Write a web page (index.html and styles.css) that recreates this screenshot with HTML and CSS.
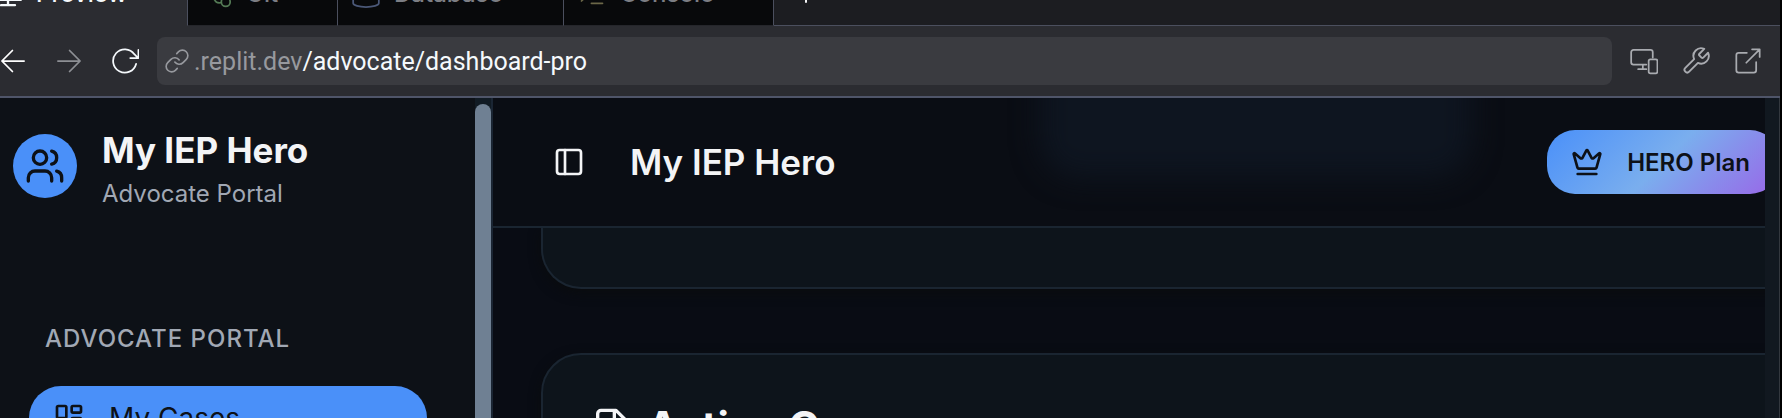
FILE: index.html
```html
<!DOCTYPE html>
<html lang="en">
<head>
<meta charset="utf-8">
<title>My IEP Hero</title>
<link rel="stylesheet" href="styles.css">
</head>
<body>
<div class="window">
  <nav class="tabs" aria-label="Panes">
    <button class="tab tab-preview active"><svg class="ico" viewBox="0 0 24 24"><path d="M1 4h22v13H1zM12 17v4.500M6 21.600h12"/></svg>Preview</button>
    <button class="tab tab-git"><svg class="ico green" viewBox="0 0 24 24"><circle cx="7" cy="5" r="3"/><circle cx="13.500" cy="18.800" r="3.800"/><path d="M7 8v2a4 4 0 0 0-3 7q1 3 5 2.500"/></svg>Git</button>
    <button class="tab tab-db"><svg class="ico blue" viewBox="0 0 24 24"><ellipse cx="12" cy="5" rx="11" ry="3"/><path d="M1 5v15c0 1.700 5 3.200 11 3.200s11-1.500 11-3.200V5"/></svg>Database</button>
    <button class="tab tab-console"><svg class="ico olive" viewBox="0 0 24 24"><path d="M3 18l6-6-6-6M11.500 20h9.500"/></svg>Console</button>
    <div class="tab-rest"><button class="add" aria-label="New tab"><svg class="ico" viewBox="0 0 24 24"><path d="M12 4v16M4 12h16"/></svg></button></div>
  </nav>
  <div class="toolbar">
    <button class="tool back" aria-label="Back"><svg viewBox="0 0 24 24"><path d="M21.500 12H3M11.500 3L2.500 12l9 9"/></svg></button>
    <button class="tool forward" aria-label="Forward"><svg viewBox="0 0 24 24"><path d="M2.500 12H21M12.500 3l9 9-9 9"/></svg></button>
    <button class="tool reload" aria-label="Reload"><svg viewBox="0 0 24 24"><path d="M21.500 14.500A10 10 0 1 1 20 6.200l2.500 2.500M23.500 2.500v7h-7"/></svg></button>
    <a class="address" href="#"><svg class="link" viewBox="1 1 22 22"><path d="M10 13a5 5 0 0 0 7.540.540l3-3a5 5 0 0 0-7.070-7.070l-1.720 1.710"/><path d="M14 11a5 5 0 0 0-7.540-.540l-3 3a5 5 0 0 0 7.070 7.070l1.710-1.710"/></svg><span><span class="host">.replit.dev</span>/advocate/dashboard-pro</span></a>
    <div class="tools">
      <button class="tool" aria-label="Devices"><svg viewBox="0 0 24 24"><path d="M19.500 9V4.500a2 2 0 0 0-2-2H3a2 2 0 0 0-2 2V13a2 2 0 0 0 2 2h11M11 15v4M7 19h7"/><rect x="16" y="10.500" width="7.500" height="12" rx="1.500"/></svg></button>
      <button class="tool" aria-label="Developer tools"><svg class="wrench" viewBox="1 1 22 22"><path d="M14.700 6.300a1 1 0 0 0 0 1.400l1.600 1.600a1 1 0 0 0 1.400 0l3.770-3.770a6 6 0 0 1-7.940 7.940l-6.910 6.910a2.120 2.120 0 0 1-3-3l6.910-6.910a6 6 0 0 1 7.940-7.940l-3.760 3.760z"/></svg></button>
      <button class="tool" aria-label="Open in new window"><svg viewBox="0 0 24 24"><path d="M11 5H4a2 2 0 0 0-2 2v13a2 2 0 0 0 2 2h13a2 2 0 0 0 2-2v-7M15.500 2H22v6.500M22 2L10.500 13.500"/></svg></button>
    </div>
  </div>
  <div class="page">
    <aside class="sidebar">
      <div class="side-body">
        <div class="brand">
          <span class="avatar"><svg class="ico" viewBox="0 0 24 24"><path d="M16 21v-2a4 4 0 0 0-4-4H6a4 4 0 0 0-4 4v2"/><circle cx="9" cy="7" r="4"/><path d="M22 21v-2a4 4 0 0 0-3-3.870M16 3.130a4 4 0 0 1 0 7.750"/></svg></span>
          <div><div class="brand-name">My IEP Hero</div><div class="brand-sub">Advocate Portal</div></div>
        </div>
        <div class="group">Advocate Portal</div>
        <a class="item" href="#"><svg class="ico" viewBox="0 0 24 24"><rect x="3" y="3" width="7" height="9" rx="1"/><rect x="14" y="3" width="7" height="5" rx="1"/><rect x="14" y="12" width="7" height="9" rx="1"/><rect x="3" y="16" width="7" height="5" rx="1"/></svg>My Cases</a>
      </div>
      <div class="side-scroll"><div class="thumb"></div></div>
    </aside>
    <main class="main">
      <header class="header">
        <button class="toggle" aria-label="Toggle sidebar"><svg class="ico" viewBox="0 0 24 24"><rect x="3" y="3" width="18" height="18" rx="2"/><path d="M9 3v18"/></svg></button>
        <h1 class="title">My IEP Hero</h1>
        <button class="plan"><svg class="ico" viewBox="0 0 24 24"><path d="M11.562 3.266a.500.500 0 0 1 .876 0L15.390 8.870a1 1 0 0 0 1.516.294L21.183 5.500a.500.500 0 0 1 .798.519l-2.834 10.246a1 1 0 0 1-.956.734H5.810a1 1 0 0 1-.957-.734L2.020 6.020a.500.500 0 0 1 .798-.519l4.276 3.664a1 1 0 0 0 1.516-.294z"/><path d="M5 21h14"/></svg>HERO Plan</button>
      </header>
      <div class="content">
        <section class="card card-top"></section>
        <section class="card card-cases"><h2 class="card-title"><svg class="ico" viewBox="0 0 24 24"><path d="M15 2H6a2 2 0 0 0-2 2v16a2 2 0 0 0 2 2h12a2 2 0 0 0 2-2V7zM14 2v6h6M16 13H8M16 17H8"/></svg>Active Cases</h2></section>
      </div>
    </main>
    <div class="page-scroll"></div>
  </div>
</div>
</body>
</html>
```

FILE: styles.css
```css
* { box-sizing: border-box; }
body { margin: 0; background: #000; font-family: Inter, "Liberation Sans", sans-serif; color: #f3f4f6; overflow: hidden; }
button { border: 0; padding: 0; margin: 0; background: none; font: inherit; color: inherit; }
a { color: inherit; text-decoration: none; }
svg { display: block; flex: none; fill: none; stroke: currentColor; stroke-width: 2; stroke-linecap: round; stroke-linejoin: round; }
.ico { width: 32px; height: 32px; }

.window { height: 100vh; margin-right: 2px; display: flex; flex-direction: column; overflow: hidden; }

.tabs { height: 26px; flex: none; display: flex; align-items: flex-end; overflow: hidden; background: #1c1d21; }
.tab { height: 64px; flex: none; display: flex; align-items: center; border-right: 1px solid #4b4f5e; border-bottom: 1px solid #25262b; background: #08090b; color: #7c7e84; font-size: 24px; font-weight: 500; }
.tab .ico { width: 28px; height: 28px; stroke-width: 1.500; }
.tab-preview { width: 188px; gap: 14px; }
.tab.active { background: #2b2c31; border-bottom-color: #2b2c31; color: #f5f9fc; }
.tab.active .ico { stroke-width: 2; margin-left: -6px; }
.tab-git { width: 150px; padding-left: 22px; gap: 8px; }
.tab-db { width: 226px; padding-left: 14px; gap: 14px; }
.tab-console { width: 210px; padding-left: 14px; gap: 14px; }
.tab .green { color: #547a55; }
.tab .blue { color: #4b5878; }
.tab .olive { color: #6b6748; }
.tab-rest { flex: 1; height: 64px; display: flex; align-items: center; padding-left: 20px; border-bottom: 1px solid #4b4f5e; }
.add .ico { width: 24px; height: 24px; }

.toolbar { height: 72px; flex: none; display: flex; align-items: center; background: #2b2c31; border-bottom: 2px solid #4f5569; }
.tool svg { width: 28px; height: 28px; stroke-width: 1.500; }
.back { color: #fff; margin-left: -1px; }
.forward { color: #8d8f94; margin-left: 28px; }
.reload { color: #f5f9fc; margin: 0 18px 0 28px; }
.address { flex: 1; height: 48px; display: flex; align-items: center; gap: 5px; padding-left: 8px; border-radius: 8px; background: #3a3b40; color: #f5f9fc; font: 25px Roboto, sans-serif; }
.host, .link { color: #97999e; }
.link { width: 24px; height: 24px; stroke-width: 1.500; }
.tools { display: flex; gap: 24px; padding: 0 18px; color: #a9abb0; }

.page { flex: 1; min-height: 0; display: flex; background: #090c14; }
.sidebar { width: 493px; flex: none; display: flex; background: #0d1117; border-right: 2px solid #1a2533; }
.side-body { flex: 1; padding: 32px 48px 0 13px; }
.side-scroll { width: 16px; padding-top: 6px; background: #111b24; }
.thumb { height: 100%; border-radius: 8px 8px 0 0; background: #6f8093; }
.brand { display: flex; align-items: flex-start; gap: 25px; }
.avatar { width: 64px; height: 64px; margin-top: 4px; border-radius: 50%; display: flex; align-items: center; justify-content: center; background: #4a90f9; color: #0d1117; }
.avatar .ico { width: 40px; height: 40px; }
.brand-name { font-size: 35px; font-weight: 700; line-height: 40px; }
.brand-sub { font-size: 24px; line-height: 48px; color: #a1a8b4; }
.group { margin: 89px 0 0 32px; font-size: 24px; line-height: 64px; font-weight: 500; letter-spacing: 1px; text-transform: uppercase; color: #a1a8b4; }
.item { height: 64px; margin: 15px 0 0 16px; padding-left: 24px; display: flex; align-items: center; gap: 24px; border-radius: 32px; background: #4a90f9; color: #0d1117; font-size: 28px; }

.main { flex: 1; min-width: 0; overflow: hidden; }
.header { position: relative; height: 130px; display: flex; align-items: center; padding-left: 60px; overflow: hidden; background: #0a0d14; border-bottom: 2px solid #1a2531; }
.header::before { content: ""; position: absolute; top: -60px; left: 43%; width: 34%; height: 140px; border-radius: 40px; background: #0e1520; filter: blur(14px); }
.title { margin: 0 0 0 45px; font-size: 35px; font-weight: 600; line-height: 44px; }
.plan { height: 64px; flex: none; margin: 0 -13px 0 auto; padding: 0 28px 0 24px; display: flex; align-items: center; gap: 24px; border-radius: 28px; background: linear-gradient(135deg, #4a90f9, #7aaeee 50%, #9966e8); color: #0d1117; font-size: 24px; font-weight: 600; }
.content { padding-left: 48px; }
.card { margin-right: -60px; border: 2px solid #1a2531; border-radius: 40px; background: #0d141b; box-shadow: 0 4px 12px #0a0c0e; }
.card-top { height: 61px; border-top: 0; border-radius: 0 0 40px 40px; }
.card-cases { margin-top: 64px; height: 240px; padding: 44px 48px; }
.card-title { margin: 0; display: flex; align-items: center; gap: 16px; font-size: 42px; line-height: 56px; font-weight: 700; }
.card-title .ico { width: 40px; height: 40px; }
.page-scroll { width: 15px; flex: none; background: #111820; border-right: 1px solid #33383f; }
```
